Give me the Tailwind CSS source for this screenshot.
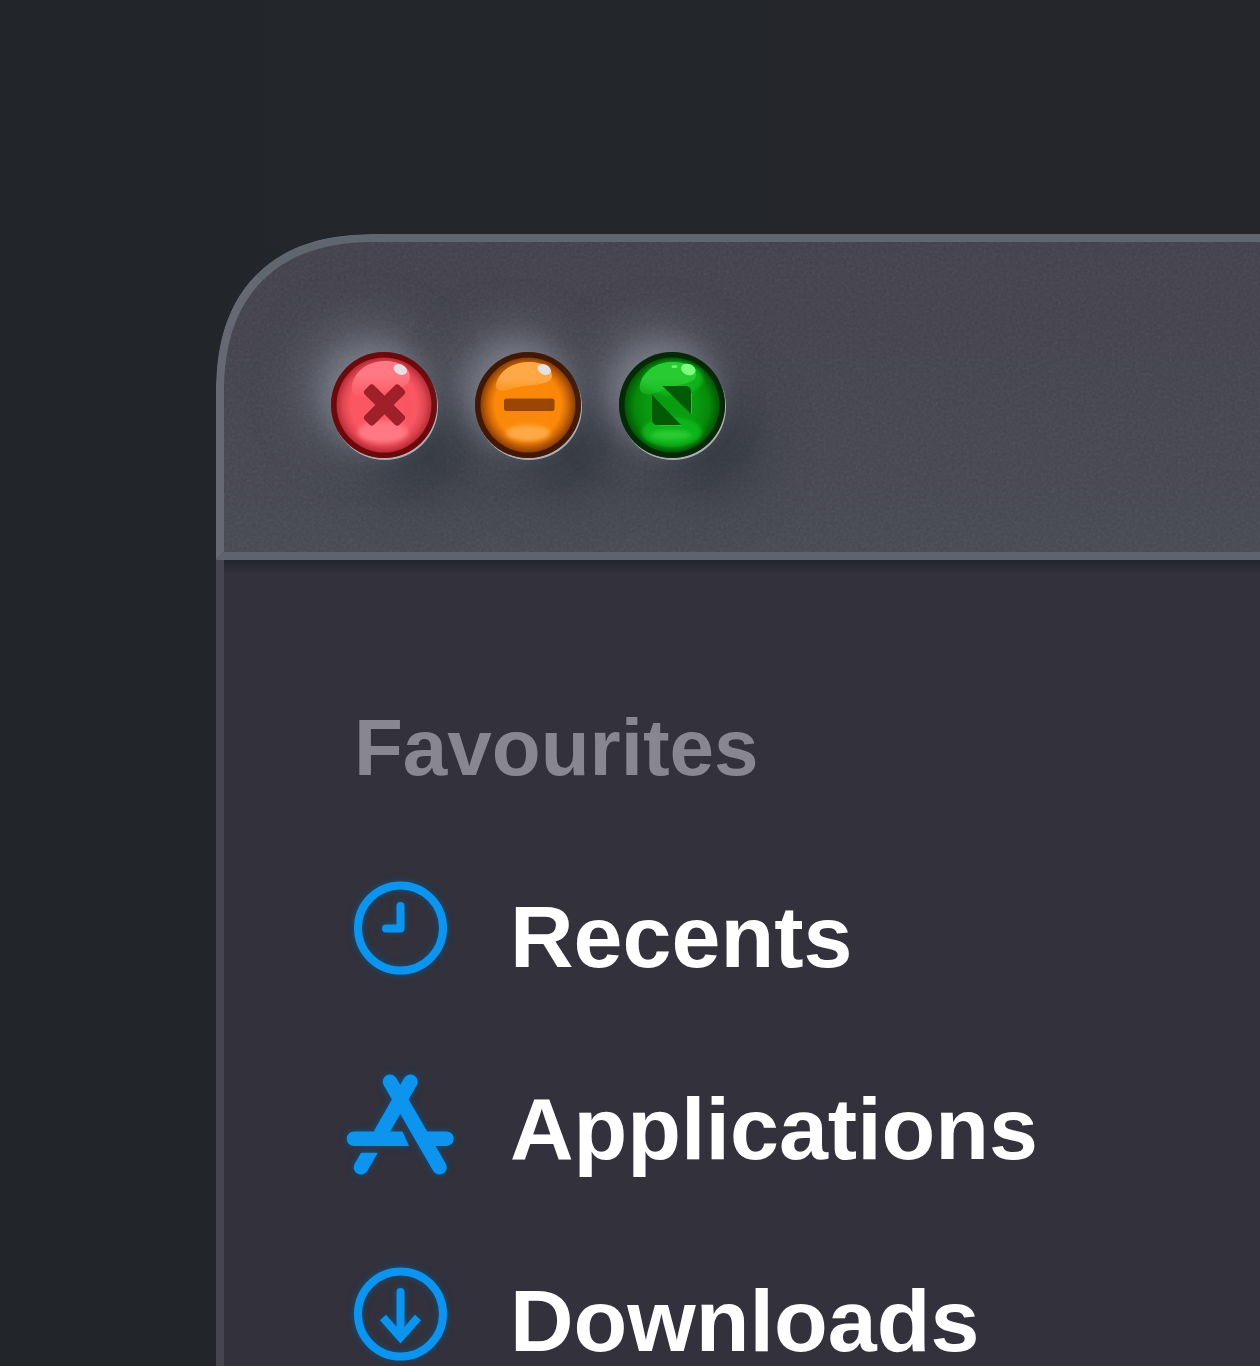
<!DOCTYPE html>
<html lang="en">
<head>
    <meta charset="UTF-8">
    <meta name="viewport" content="width=device-width, initial-scale=1.0">
    <title>Finder</title>
    <script src="https://cdn.jsdelivr.net/npm/@tailwindcss/browser@4"></script>
</head>
<body class="h-screen overflow-hidden bg-linear-to-r from-[#22262a] to-[#25262b] pl-54 pt-[234px] font-['Liberation_Sans',Arial,sans-serif]">

    <main class="flex h-full flex-col overflow-hidden rounded-tl-[160px] [corner-shape:superellipse(1.25)] bg-[#32313c]">

        <!-- Title bar -->
        <header class="relative shrink-0 overflow-hidden rounded-tl-[160px] [corner-shape:superellipse(1.25)] border-t-8 border-l-8 border-b-8 border-t-[#5f6670] border-l-[#666874] border-b-[#5f636d] bg-linear-to-b from-[#413f4a] to-[#454752] pt-[110px] pb-[94px] pl-[107px]">
            <svg class="pointer-events-none absolute inset-0 size-full opacity-10" aria-hidden="true">
                <filter id="grain">
                    <feTurbulence type="fractalNoise" baseFrequency="0.35" numOctaves="3"/>
                    <feColorMatrix type="saturate" values="0"/>
                </filter>
                <rect width="100%" height="100%" filter="url(#grain)"/>
            </svg>

            <div class="relative flex gap-[38px]">
                <button type="button" aria-label="Close" class="size-[106px] rounded-full shadow-[1px_2px_0_#b0adb3,-18px_-18px_56px_rgb(150_158_170/0.55),-8px_-8px_24px_rgb(139_140_155/0.4),34px_36px_50px_rgb(44_50_58/0.65)]">
                    <svg viewBox="0 0 106 106" class="size-full">
                        <defs>
                            <radialGradient id="red">
                                <stop offset="0.7" stop-color="#fb5763"/>
                                <stop offset="0.86" stop-color="#e04652"/>
                                <stop offset="1" stop-color="#b92a36"/>
                            </radialGradient>
                            <linearGradient id="redShine" x2="0" y2="1">
                                <stop offset="0.4" stop-color="#ff7883"/>
                                <stop offset="1" stop-color="#ff7883" stop-opacity="0"/>
                            </linearGradient>
                            <filter id="soft" x="-20%" y="-40%" width="140%" height="180%"><feGaussianBlur stdDeviation="2"/></filter>
                        </defs>
                        <circle cx="53" cy="53" r="53" fill="#6e090b"/>
                        <circle cx="53" cy="53" r="47.5" fill="url(#red)"/>
                        <path d="M21 32C25 18 38 9 54 9c16 0 25 7 25 16 0 10-14 13-29 16-12 3-19 8-25 3-4-3-5-8-4-12z" fill="url(#redShine)"/>
                        <ellipse cx="52" cy="80" rx="25" ry="11" fill="#ff7883" filter="url(#soft)"/>
                        <g fill="#9f2029">
                            <rect x="29" y="46.500" width="49" height="13" rx="3.500" transform="rotate(45 53.500 53)"/>
                            <rect x="29" y="46.500" width="49" height="13" rx="3.500" transform="rotate(-45 53.500 53)"/>
                        </g>
                        <ellipse cx="69.300" cy="17.500" rx="7" ry="5" fill="#e8dfe3" transform="rotate(25 69.300 17.500)"/>
                    </svg>
                </button>

                <button type="button" aria-label="Minimise" class="size-[106px] rounded-full shadow-[1px_2px_0_#b0adb3,-16px_-18px_50px_rgb(150_158_170/0.5),-8px_-10px_24px_rgb(139_140_155/0.4),34px_36px_50px_rgb(44_50_58/0.65)]">
                    <svg viewBox="0 0 106 106" class="size-full">
                        <defs>
                            <radialGradient id="orange">
                                <stop offset="0.7" stop-color="#fc8809"/>
                                <stop offset="0.84" stop-color="#d26906"/>
                                <stop offset="1" stop-color="#8a3c04"/>
                            </radialGradient>
                            <linearGradient id="orangeShine" x2="0" y2="1">
                                <stop offset="0.6" stop-color="#ffa845"/>
                                <stop offset="1" stop-color="#ffa845" stop-opacity="0.4"/>
                            </linearGradient>
                        </defs>
                        <circle cx="53" cy="53" r="53" fill="#421804"/>
                        <circle cx="53" cy="53" r="47.500" fill="url(#orange)"/>
                        <path d="M21 32C25 18 38 10 54 10c16 0 23 7 23 14 0 7-14 9-27 10-13 1-20 7-26 4-3-1-4-3-3-6z" fill="url(#orangeShine)"/>
                        <ellipse cx="53" cy="81" rx="22" ry="8" fill="#ffa845" filter="url(#soft)"/>
                        <rect x="29" y="46.500" width="50.500" height="12.500" rx="2.500" fill="#9a4604"/>
                        <ellipse cx="69.300" cy="17.500" rx="7" ry="5" fill="#e8dfe3" transform="rotate(25 69.300 17.500)"/>
                    </svg>
                </button>

                <button type="button" aria-label="Full screen" class="size-[106px] rounded-full shadow-[1px_2px_0_#b0adb3,-16px_-18px_50px_rgb(150_158_170/0.5),-8px_-10px_24px_rgb(139_140_155/0.4),34px_36px_50px_rgb(44_50_58/0.65)]">
                    <svg viewBox="0 0 106 106" class="size-full">
                        <defs>
                            <radialGradient id="green">
                                <stop offset="0.5" stop-color="#0a9c10"/>
                                <stop offset="0.78" stop-color="#068a0a"/>
                                <stop offset="1" stop-color="#045607"/>
                            </radialGradient>
                            <linearGradient id="greenShine" x2="0" y2="1">
                                <stop offset="0.5" stop-color="#29cb33"/>
                                <stop offset="1" stop-color="#29cb33" stop-opacity="0.4"/>
                            </linearGradient>
                        </defs>
                        <circle cx="53" cy="53" r="53" fill="#032a05"/>
                        <circle cx="53" cy="53" r="47.500" fill="url(#green)"/>
                        <ellipse cx="53" cy="80" rx="30" ry="15" fill="#0db31a" filter="url(#soft)"/>
                        <ellipse cx="55" cy="27" rx="29" ry="17" fill="#0db31a" filter="url(#soft)"/>
                        <path d="M21 32C25 18 38 10 54 10c16 0 23 7 23 13 0 8-14 9-24 12-12 3-19 9-27 7-5-1-6-6-5-10z" fill="url(#greenShine)"/>
                        <ellipse cx="52" cy="83" rx="20" ry="5" fill="#29cb33" filter="url(#soft)"/>
                        <path d="M33 43v24q0 6 6 6h23z" fill="#035a05"/>
                        <path d="M43.500 34H66q6 0 6 6v22z" fill="#035a05"/>
                        <path d="M40 73.500h22M72.500 41v21" fill="none" stroke="#2cbf35" stroke-width="1"/>
                        <ellipse cx="69.300" cy="17.500" rx="7.500" ry="5.500" fill="#7dff80" transform="rotate(20 69.300 17.500)"/>
                        <ellipse cx="55.500" cy="14.500" rx="3" ry="1.500" fill="#6cf070"/>
                    </svg>
                </button>
            </div>
        </header>

        <!-- Sidebar -->
        <nav class="min-h-0 flex-1 overflow-hidden border-l-8 border-[#454450] bg-[linear-gradient(#24242b,#32313c_14px)] pl-[122px] pt-[140px] font-bold">
            <h2 class="pl-2 text-[80px] leading-24 text-[#888791]">Favourites</h2>

            <ul class="mt-[93px] flex flex-col gap-24 text-[88px] leading-24 text-white">
                <li>
                    <a href="#recents" class="flex h-24 items-center gap-14">
                        <svg viewBox="0 0 108 108" class="mb-4 size-[108px] shrink-0 overflow-visible drop-shadow-[0_0_3px_#06548c]" fill="none" stroke="#0c94ef" stroke-width="8">
                            <circle cx="54.500" cy="53" r="42.500"/>
                            <path d="M54.500 31v22.500H40" stroke-linecap="round" stroke-linejoin="round"/>
                        </svg>
                        Recents
                    </a>
                </li>
                <li>
                    <a href="#applications" class="flex h-24 items-center gap-14">
                        <svg viewBox="0 -1 108 108" class="mb-4 size-[108px] shrink-0 overflow-visible drop-shadow-[0_0_3px_#06548c]" fill="none" stroke="#0c94ef" stroke-width="14.500" stroke-linecap="round">
                            <clipPath id="stub"><path d="M0 84.700h40V110H0z"/></clipPath>
                            <path d="M44 13.700 93.500 99.300M64.500 13.700 35 65"/>
                            <path d="M80 70.700h20.500"/>
                            <path d="M8 63.500H56.500L63 78H8a7.250 7.250 0 0 1 0-14.500z" fill="#0c94ef" stroke="none"/>
                            <path d="M15 99.300 30 73.500" clip-path="url(#stub)"/>
                        </svg>
                        Applications
                    </a>
                </li>
                <li>
                    <a href="#downloads" class="flex h-24 items-center gap-14">
                        <svg viewBox="0 -1 108 108" class="mb-4 size-[108px] shrink-0 overflow-visible drop-shadow-[0_0_3px_#06548c]" fill="none" stroke="#0c94ef" stroke-width="8">
                            <circle cx="54.500" cy="54" r="42.500"/>
                            <path d="M54.500 32v44" stroke-linecap="round"/>
                            <path d="M37 57.500l17.500 20 17.500-20"/>
                        </svg>
                        Downloads
                    </a>
                </li>
            </ul>
        </nav>
    </main>

</body>
</html>
